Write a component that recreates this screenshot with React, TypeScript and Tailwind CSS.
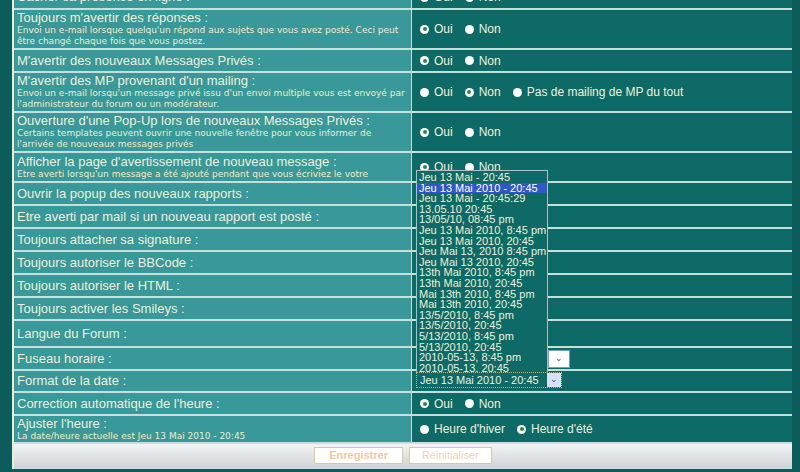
const rows: { label: string; sub?: string; h: number; opts?: { t: string; on?: boolean }[] }[] = [
  { label: "Cacher sa présence en ligne :", h: 10, opts: [{ t: "Oui" }, { t: "Non" }] },
  { label: "Toujours m'avertir des réponses :", sub: "Envoi un e-mail lorsque quelqu'un répond aux sujets que vous avez posté. Ceci peut être changé chaque fois que vous postez.", h: 40, opts: [{ t: "Oui", on: true }, { t: "Non" }] },
  { label: "M'avertir des nouveaux Messages Privés :", h: 23, opts: [{ t: "Oui", on: true }, { t: "Non" }] },
  { label: "M'avertir des MP provenant d'un mailing :", sub: "Envoi un e-mail lorsqu'un message privé issu d'un envoi multiple vous est envoyé par l'administrateur du forum ou un modérateur.", h: 40, opts: [{ t: "Oui" }, { t: "Non", on: true }, { t: "Pas de mailing de MP du tout" }] },
  { label: "Ouverture d'une Pop-Up lors de nouveaux Messages Privés :", sub: "Certains templates peuvent ouvrir une nouvelle fenêtre pour vous informer de l'arrivée de nouveaux messages privés", h: 40, opts: [{ t: "Oui", on: true }, { t: "Non" }] },
  { label: "Afficher la page d'avertissement de nouveau message :", sub: "Etre averti lorsqu'un message a été ajouté pendant que vous écriviez le votre", h: 30, opts: [{ t: "Oui", on: true }, { t: "Non" }] },
  { label: "Ouvrir la popup des nouveaux rapports :", h: 23 },
  { label: "Etre averti par mail si un nouveau rapport est posté :", h: 23 },
  { label: "Toujours attacher sa signature :", h: 23 },
  { label: "Toujours autoriser le BBCode :", h: 23 },
  { label: "Toujours autoriser le HTML :", h: 23 },
  { label: "Toujours activer les Smileys :", h: 23 },
  { label: "Langue du Forum :", h: 27 },
  { label: "Fuseau horaire :", h: 23 },
  { label: "Format de la date :", h: 22 },
  { label: "Correction automatique de l'heure :", h: 23, opts: [{ t: "Oui", on: true }, { t: "Non" }] },
  { label: "Ajuster l'heure :", sub: "La date/heure actuelle est Jeu 13 Mai 2010 - 20:45", h: 28, opts: [{ t: "Heure d'hiver" }, { t: "Heure d'été", on: true }] },
];

const formats = [
  "Jeu 13 Mai - 20:45", "Jeu 13 Mai 2010 - 20:45", "Jeu 13 Mai - 20:45:29", "13.05.10 20:45", "13/05/10, 08:45 pm",
  "Jeu 13 Mai 2010, 8:45 pm", "Jeu 13 Mai 2010, 20:45", "Jeu Mai 13, 2010 8:45 pm", "Jeu Mai 13 2010, 20:45",
  "13th Mai 2010, 8:45 pm", "13th Mai 2010, 20:45", "Mai 13th 2010, 8:45 pm", "Mai 13th 2010, 20:45",
  "13/5/2010, 8:45 pm", "13/5/2010, 20:45", "5/13/2010, 8:45 pm", "5/13/2010, 20:45", "2010-05-13, 8:45 pm", "2010-05-13, 20:45",
];

function Radio({ on }: { on?: boolean }) {
  return (
    <span className="w-[9px] h-[9px] rounded-full bg-white flex items-center justify-center">
      {on && <span className="w-[4px] h-[4px] rounded-full bg-[#2a8a3a]" />}
    </span>
  );
}

export default function App() {
  return (
    <div className="w-[800px] h-[472px] overflow-hidden bg-[#0b5c5a] pl-[12px] pr-[8px] text-[#eef0d8]" style={{ fontFamily: '"Liberation Sans", Arial, sans-serif' }}>
      <div className="relative border-l-2 border-[#e8ecd8] mt-[-14px]">
        {rows.map((r, i) => (
          <div key={i} className="flex border-b-2 border-[#c4e0dc]" style={{ height: i === 0 ? 24 : r.h }}>
            <div className="w-[398px] bg-[#38989a] border-r border-[#c4e0dc] px-[3px] flex flex-col justify-center">
              <div className="text-[13px] leading-[14px]">{r.label}</div>
              {r.sub && <div className="text-[9px] leading-[11px] text-[#f0ecc8]" style={{ fontFamily: '"DejaVu Sans", Verdana, sans-serif' }}>{r.sub}</div>}
            </div>
            <div className="flex-1 bg-[#0e6a66] flex items-center pl-[8px] gap-[12px] text-[12px]">
              {r.opts?.map((o, j) => (
                <span key={j} className="flex items-center gap-[5px]"><Radio on={o.on} />{o.t}</span>
              ))}
            </div>
          </div>
        ))}
        <div className="h-[25px] flex items-center justify-center gap-[6px] bg-gradient-to-b from-[#f4f4f4] to-[#cfd4d8] border-b-2 border-[#c4e0dc]">
          <span className="px-[14px] h-[17px] flex items-center bg-white border border-[#d8c8a8] text-[11px] font-bold text-[#f0c89c]">Enregistrer</span>
          <span className="px-[12px] h-[17px] flex items-center bg-white border border-[#d8c8a8] text-[11px] text-[#f0d4b8]">Réinitialiser</span>
        </div>

        <div className="absolute left-[534px] top-[364px] w-[22px] h-[18px] bg-white border border-[#7a9ac8] flex items-center justify-center text-[9px] text-[#3050a0]">⌄</div>
        <div className="absolute left-[402px] top-[184px] w-[132px] bg-[#0e6a66] border border-[#b0c0c0] text-[11px] leading-[10.6px] py-[1px]">
          {formats.map((f, i) => (
            <div key={i} className={"px-[2px] whitespace-nowrap " + (i === 1 ? "bg-[#3058c8] text-white" : "")}>{f}</div>
          ))}
        </div>
        <div className="absolute left-[402px] top-[386px] w-[146px] h-[16px] border border-dotted border-[#c8b080] bg-[#0e6a66] flex items-center justify-between text-[11px] pl-[3px]">
          Jeu 13 Mai 2010 - 20:45
          <span className="w-[14px] h-[14px] bg-[#d8e0f4] flex items-center justify-center text-[9px] text-[#3050a0]">⌄</span>
        </div>
      </div>
    </div>
  );
}
